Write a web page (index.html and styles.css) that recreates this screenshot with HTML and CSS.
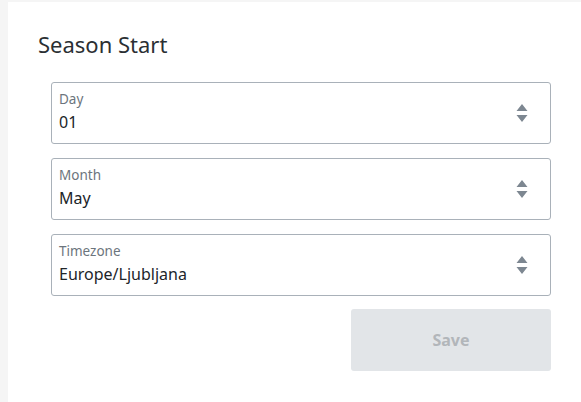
FILE: index.html
```html
<!DOCTYPE html>
<html>
<head>
<meta charset="utf-8">
<link rel="stylesheet" href="styles.css">
</head>
<body>
<div class="card">
  <h2 class="title">Season Start</h2>
  <form class="form">
    <div class="field">
      <div class="field-text">
        <span class="label">Day</span>
        <span class="value">01</span>
      </div>
      <svg class="caret" width="12" height="20" viewBox="0 0 12 20"><path d="M6 1 L11.5 8 L0.5 8 Z M0.5 12 L11.5 12 L6 19 Z" fill="#7d8791"/></svg>
    </div>
    <div class="field">
      <div class="field-text">
        <span class="label">Month</span>
        <span class="value">May</span>
      </div>
      <svg class="caret" width="12" height="20" viewBox="0 0 12 20"><path d="M6 1 L11.5 8 L0.5 8 Z M0.5 12 L11.5 12 L6 19 Z" fill="#7d8791"/></svg>
    </div>
    <div class="field">
      <div class="field-text">
        <span class="label">Timezone</span>
        <span class="value">Europe/Ljubljana</span>
      </div>
      <svg class="caret" width="12" height="20" viewBox="0 0 12 20"><path d="M6 1 L11.5 8 L0.5 8 Z M0.5 12 L11.5 12 L6 19 Z" fill="#7d8791"/></svg>
    </div>
    <div class="actions">
      <button type="button" class="save" disabled>Save</button>
    </div>
  </form>
</div>
</body>
</html>
```

FILE: styles.css
```css
html, body {
  margin: 0;
  padding: 0;
  height: 100%;
}
body {
  background: #f5f5f5;
  font-family: "Noto Sans", "Open Sans", sans-serif;
  color: #212529;
}
.card {
  margin: 2px 0 0 8px;
  background: #ffffff;
  min-height: 400px;
  padding: 27px 30px 0 30px;
  box-sizing: border-box;
}
.title {
  margin: 0;
  font-size: 22px;
  font-weight: 400;
  line-height: 30px;
  color: #2b2f33;
}
.form {
  margin: 23px 0 0 13px;
  display: flex;
  flex-direction: column;
  gap: 14px;
  width: 500px;
}
.field {
  box-sizing: border-box;
  height: 62px;
  border: 1px solid #a9b1b9;
  border-radius: 3px;
  display: flex;
  align-items: center;
  padding: 0 22px 0 7px;
}
.field-text {
  flex: 1;
  display: flex;
  flex-direction: column;
  padding-bottom: 2px;
}
.label {
  font-size: 13.5px;
  line-height: 18px;
  margin-bottom: 2px;
  color: #6c757d;
}
.value {
  font-size: 16px;
  line-height: 24px;
  color: #212529;
}
.caret {
  display: block;
}
.actions {
  display: flex;
  justify-content: flex-end;
  margin-top: -1px;
}
.save {
  width: 200px;
  height: 62px;
  border: none;
  border-radius: 3px;
  background: #e2e5e8;
  color: #b2b6ba;
  font-family: "Noto Sans", "Open Sans", sans-serif;
  font-size: 16px;
  font-weight: 700;
}
```
